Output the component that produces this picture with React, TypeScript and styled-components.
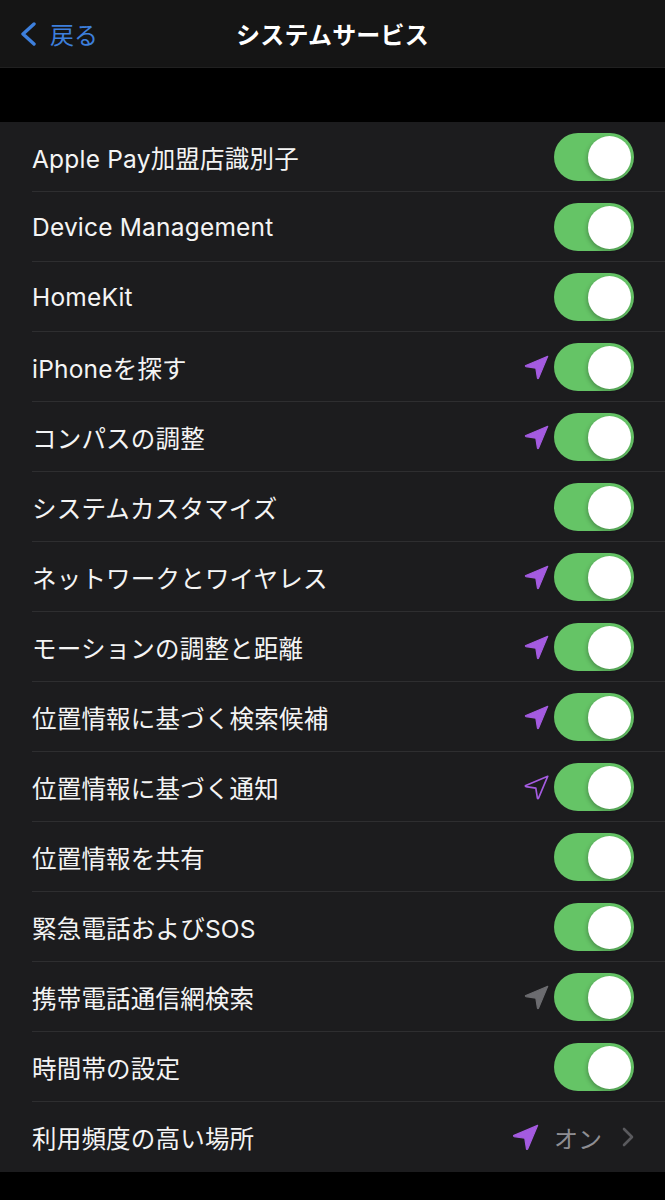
import React from "react";
import styled, { createGlobalStyle } from "styled-components";

const Global = createGlobalStyle`
  html, body { margin: 0; padding: 0; background: #000; }
  body { font-family: "Inter", "Noto Sans CJK JP", sans-serif; -webkit-font-smoothing: antialiased; }
`;

const Page = styled.div`
  width: 665px;
  height: 1200px;
  background: #000;
  overflow: hidden;
`;

const NavBar = styled.header`
  height: 68px;
  background: #151515;
  display: grid;
  grid-template-columns: 1fr auto 1fr;
  align-items: center;
  border-bottom: 1px solid #202020;
  box-sizing: border-box;
`;

const Back = styled.div`
  display: flex;
  align-items: center;
  gap: 12px;
  padding-left: 19px;
  color: #3d7fdc;
  font-family: "Noto Sans CJK JP", sans-serif;
  font-size: 24px;
  line-height: 1;
`;

const Title = styled.h1`
  margin: 0;
  color: #fff;
  font-family: "Noto Sans CJK JP", sans-serif;
  font-weight: 700;
  font-size: 24px;
  letter-spacing: 0.2px;
`;

const Gap = styled.div`
  height: 54px;
`;

const List = styled.div`
  background: #1c1c1e;
`;

const Row = styled.div<{ $last?: boolean }>`
  height: 70px;
  display: flex;
  align-items: center;
  padding-left: 32px;
  position: relative;
  &::after {
    content: "";
    display: ${(p) => (p.$last ? "none" : "block")};
    position: absolute;
    left: 32px;
    right: 0;
    bottom: 0;
    height: 1px;
    background: #2e2e30;
  }
`;

const Label = styled.div`
  flex: 1;
  color: #f4f4f4;
  font-family: "Inter", "Noto Sans CJK JP", sans-serif;
  font-size: 24.5px;
  letter-spacing: 0.2px;
`;

const Trail = styled.div`
  display: flex;
  align-items: center;
  padding-right: 31px;
`;

const ArrowSlot = styled.div`
  width: 28px;
  height: 28px;
  margin-right: 4px;
  display: flex;
  align-items: center;
  justify-content: center;
`;

const Toggle = styled.div`
  width: 80px;
  height: 48px;
  border-radius: 24px;
  background: #65c466;
  display: flex;
  align-items: center;
  justify-content: flex-end;
  padding: 0 3px;
  box-sizing: border-box;
`;

const Knob = styled.div`
  width: 43px;
  height: 43px;
  border-radius: 50%;
  background: #fff;
  box-shadow: -1px 2px 4px rgba(0, 0, 0, 0.25);
`;

const Value = styled.span`
  color: #8e8e93;
  font-family: "Noto Sans CJK JP", sans-serif;
  font-size: 24px;
  margin-left: 14px;
  margin-right: 20px;
`;

type Arrow = "fill" | "outline" | "gray" | undefined;

const LocArrow = ({ kind, size = 27 }: { kind: Exclude<Arrow, undefined>; size?: number }) => {
  const color = kind === "gray" ? "#6c6c70" : "#a45be0";
  const d = "M22 2 L2.5 10.2 Q1.6 10.7 2.6 11.2 L11.4 12.6 L12.8 21.4 Q13.3 22.4 13.8 21.5 Z";
  return (
    <svg width={size} height={size} viewBox="0 0 24 24">
      {kind === "outline" ? (
        <path d={d} fill="none" stroke={color} strokeWidth={1.5} strokeLinejoin="round" />
      ) : (
        <path d={d} fill={color} stroke={color} strokeWidth={1} strokeLinejoin="round" />
      )}
    </svg>
  );
};

const items: { label: string; arrow?: Arrow }[] = [
  { label: "Apple Pay加盟店識別子" },
  { label: "Device Management" },
  { label: "HomeKit" },
  { label: "iPhoneを探す", arrow: "fill" },
  { label: "コンパスの調整", arrow: "fill" },
  { label: "システムカスタマイズ" },
  { label: "ネットワークとワイヤレス", arrow: "fill" },
  { label: "モーションの調整と距離", arrow: "fill" },
  { label: "位置情報に基づく検索候補", arrow: "fill" },
  { label: "位置情報に基づく通知", arrow: "outline" },
  { label: "位置情報を共有" },
  { label: "緊急電話およびSOS" },
  { label: "携帯電話通信網検索", arrow: "gray" },
  { label: "時間帯の設定" },
];

export default function App() {
  return (
    <Page>
      <Global />
      <NavBar>
        <Back>
          <svg width="19" height="24" viewBox="0 0 19 24">
            <path d="M15 2 L4 12 L15 22" fill="none" stroke="#3d7fdc" strokeWidth="3.4" strokeLinecap="round" strokeLinejoin="round" />
          </svg>
          <span>戻る</span>
        </Back>
        <Title>システムサービス</Title>
        <div />
      </NavBar>
      <Gap />
      <List>
        {items.map((it) => (
          <Row key={it.label}>
            <Label>{it.label}</Label>
            <Trail>
              <ArrowSlot>{it.arrow ? <LocArrow kind={it.arrow} /> : null}</ArrowSlot>
              <Toggle>
                <Knob />
              </Toggle>
            </Trail>
          </Row>
        ))}
        <Row $last>
          <Label>利用頻度の高い場所</Label>
          <Trail>
            <LocArrow kind="fill" size={29} />
            <Value>オン</Value>
            <svg width="12" height="20" viewBox="0 0 12 20">
              <path d="M2 2 L10 10 L2 18" fill="none" stroke="#5a5a5e" strokeWidth="2.6" strokeLinecap="round" strokeLinejoin="round" />
            </svg>
          </Trail>
        </Row>
      </List>
    </Page>
  );
}
